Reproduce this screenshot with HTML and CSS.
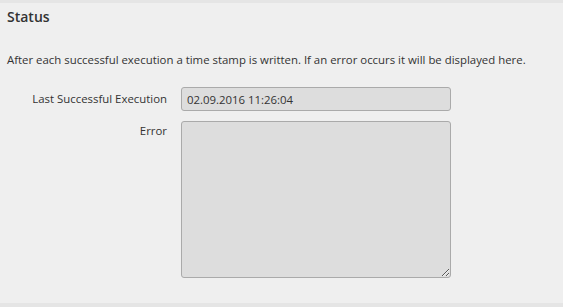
FILE: index.html
```html
<!DOCTYPE html>
<html>
<head>
<meta charset="utf-8">
<link rel="stylesheet" href="styles.css">
</head>
<body>
<div class="panel">
  <h2 class="title">Status</h2>
  <p class="desc">After each successful execution a time stamp is written. If an error occurs it will be displayed here.</p>
  <div class="form">
    <label class="label">Last Successful Execution</label>
    <input class="field" type="text" value="02.09.2016 11:26:04" readonly>
    <label class="label label-error">Error</label>
    <textarea class="area" readonly></textarea>
  </div>
</div>
<div class="next"></div>
</body>
</html>
```
FILE: styles.css
```css
html, body {
  margin: 0;
  padding: 0;
  background: #efefef;
  font-family: "Open Sans", "Liberation Sans", sans-serif;
  color: #333;
}
.panel {
  border-top: 3px solid #e5e5e5;
  height: 303px;
  box-sizing: border-box;
  padding: 0 7px;
}
.title {
  margin: 0;
  padding-top: 4px;
  font-size: 14px;
  font-weight: 600;
  line-height: 20px;
  color: #333;
}
.desc {
  margin: 25px 0 0;
  font-size: 11.4px;
  line-height: 16px;
  color: #333;
}
.form {
  display: grid;
  grid-template-columns: 160px 270px;
  column-gap: 14px;
  row-gap: 10px;
  margin-top: 19px;
}
.label {
  text-align: right;
  font-size: 11.4px;
  line-height: 24px;
  color: #333;
}
.label-error {
  align-self: start;
  line-height: 18px;
  padding-top: 1px;
}
.field {
  box-sizing: border-box;
  width: 270px;
  height: 24px;
  margin: 0;
  padding: 0 5px;
  border: 1px solid #aaa;
  border-radius: 3px;
  background: #dddddd;
  font-family: "Open Sans", "Liberation Sans", sans-serif;
  font-size: 11.4px;
  color: #333;
  outline: none;
}
.area {
  box-sizing: border-box;
  width: 270px;
  height: 157px;
  margin: 0;
  padding: 4px 5px;
  border: 1px solid #aaa;
  border-radius: 3px;
  background: #dddddd;
  font-family: "Open Sans", "Liberation Sans", sans-serif;
  font-size: 11.4px;
  color: #333;
  outline: none;
  resize: both;
}
.next {
  height: 4px;
  background: #e5e5e5;
}
```
